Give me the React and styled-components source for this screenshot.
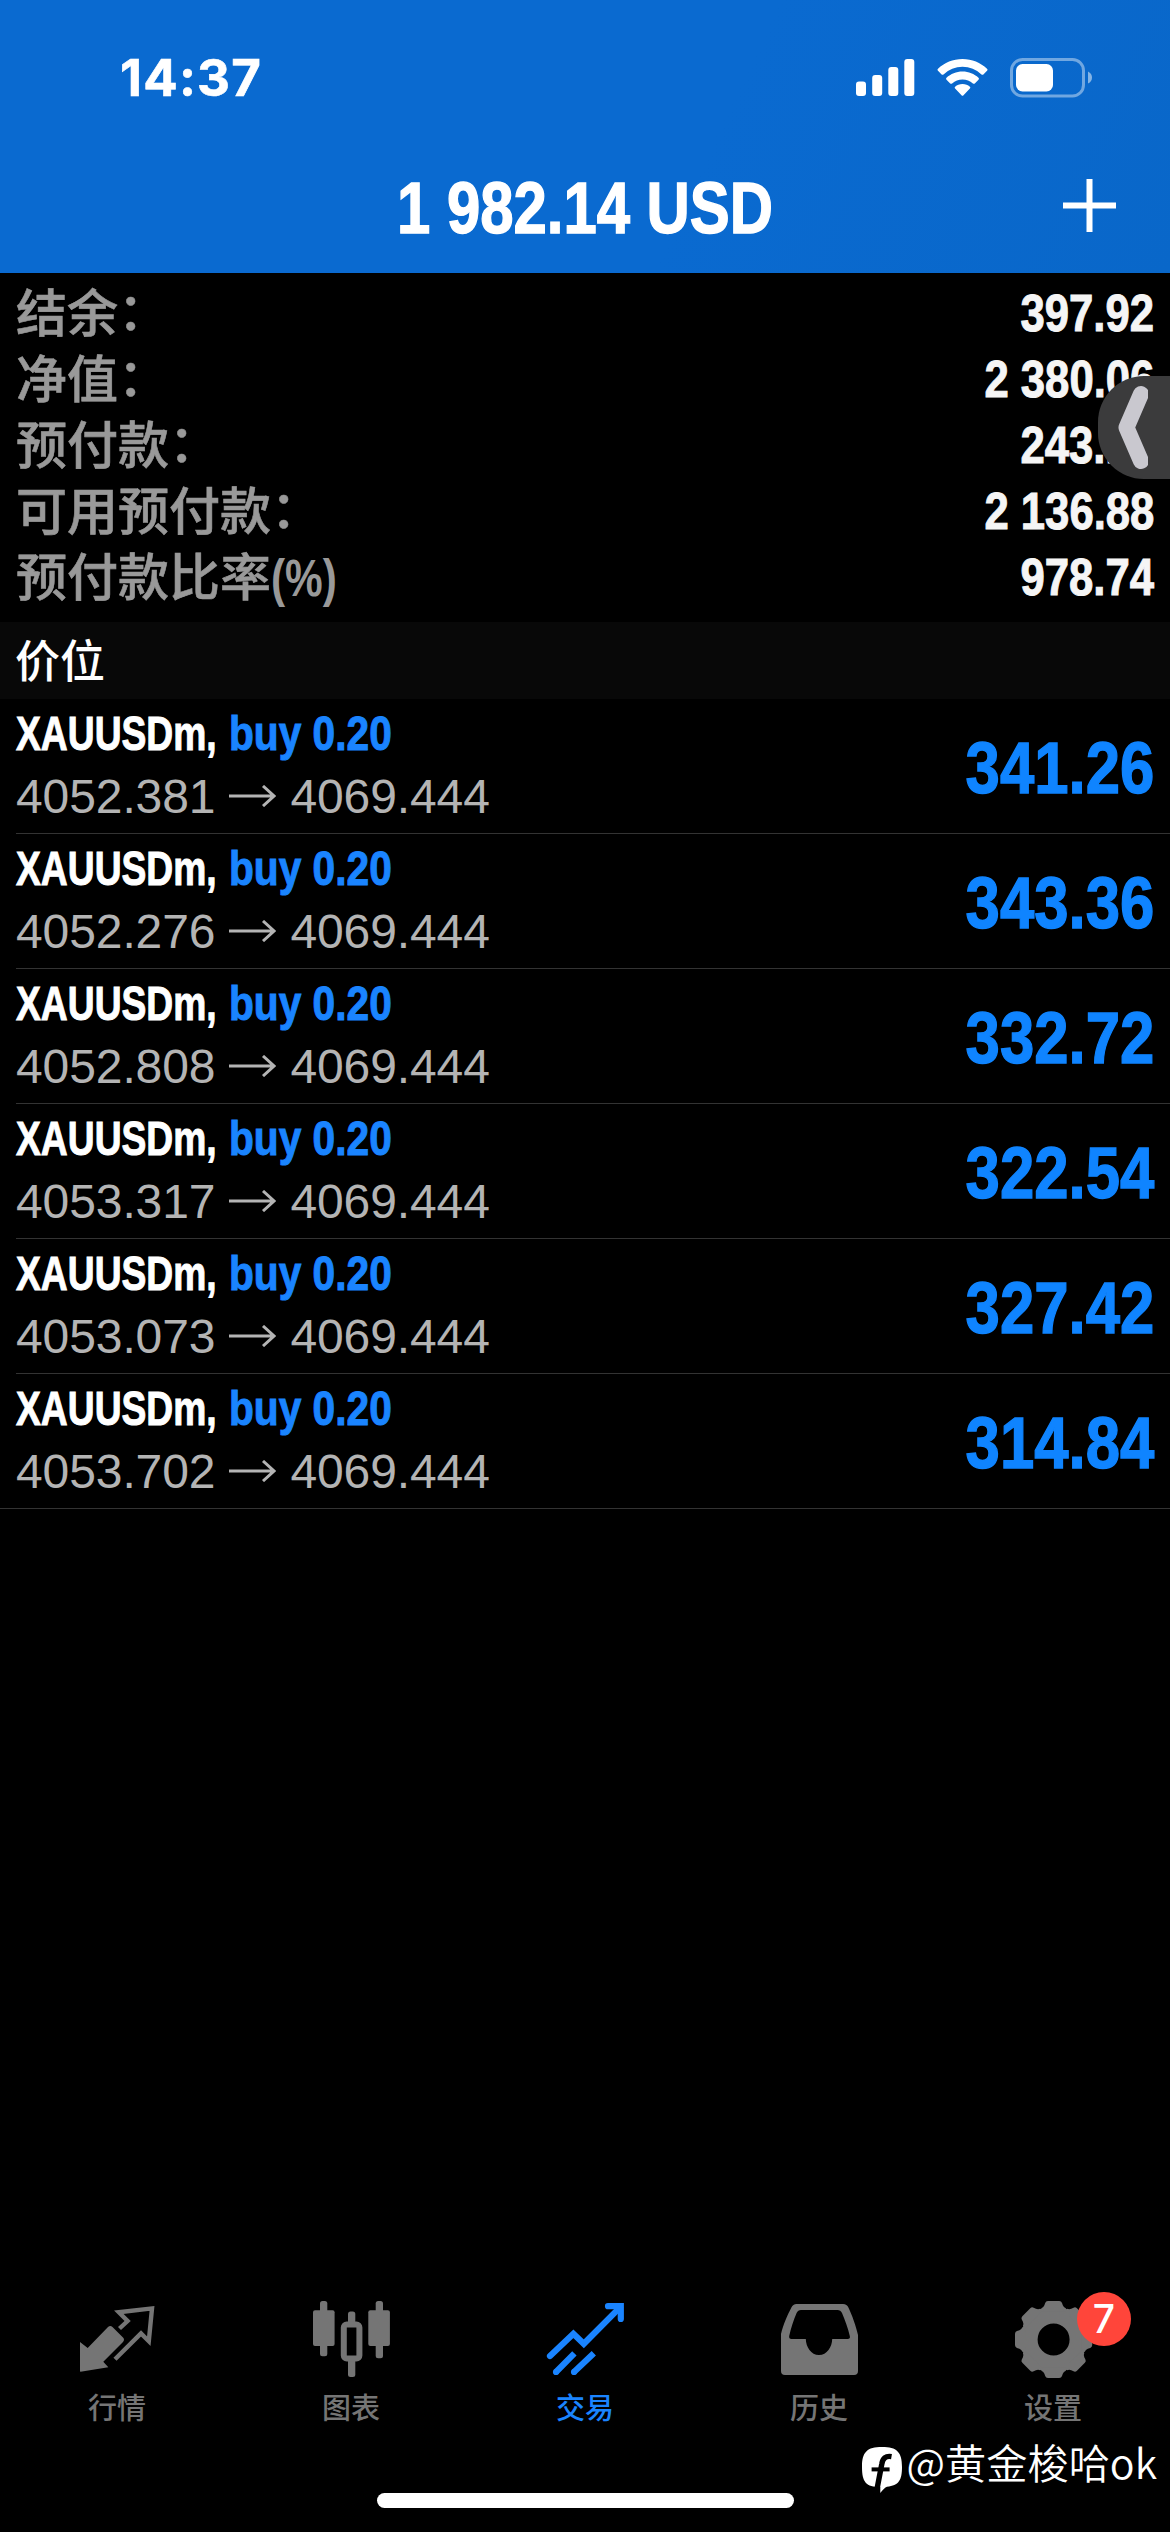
import React from 'react'
import styled, { createGlobalStyle } from 'styled-components'

const summary = [
  { label: '结余', colon: true, value: '397.92' },
  { label: '净值', colon: true, value: '2 380.06' },
  { label: '预付款', colon: true, value: '243.18' },
  { label: '可用预付款', colon: true, value: '2 136.88' },
  { label: '预付款比率', unit: '(%)', value: '978.74' },
]

const positions = [
  { open: '4052.381', profit: '341.26' },
  { open: '4052.276', profit: '343.36' },
  { open: '4052.808', profit: '332.72' },
  { open: '4053.317', profit: '322.54' },
  { open: '4053.073', profit: '327.42' },
  { open: '4053.702', profit: '314.84' },
]

const QuotesIcon = () => (
  <TabSvg viewBox="0 0 80 80">
    <path
      d="M3 42 L10.7 48 L31 27 Q33.3 24.8 35.5 27 L46 37.6 Q48 39.8 46 42 L26.3 61.7 L31.3 67.3 L3.5 71.7 Q3 71.7 3 71 Z"
      fill="currentColor"
    />
    <path
      d="M42.5 28.5 L50.6 21 L41.8 12.2 L75 8.4 L71.8 41.2 L64 33.4 L38 59.2"
      fill="none"
      stroke="currentColor"
      strokeWidth="4.4"
    />
  </TabSvg>
)

const ChartIcon = () => (
  <TabSvg viewBox="0 0 80 80">
    <g fill="currentColor">
      <rect x="9" y="1" width="7.3" height="55.3" rx="2.5" />
      <rect x="2" y="10.3" width="21.6" height="35.7" rx="2" />
      <rect x="64.7" y="1" width="7.3" height="57.3" rx="2.5" />
      <rect x="57.3" y="10.3" width="21.6" height="35.7" rx="2" />
      <rect x="37" y="11.5" width="7.3" height="14" rx="2.5" />
      <rect x="37" y="58" width="7.3" height="19" rx="2.5" />
    </g>
    <rect x="32.8" y="24.6" width="15.6" height="33.8" rx="3" fill="none" stroke="currentColor" strokeWidth="6" />
  </TabSvg>
)

const TradeIcon = () => (
  <TabSvg viewBox="0 0 80 80">
    <g fill="none" stroke="currentColor" strokeWidth="6.2">
      <path d="M5 56 L28.4 33.8 L38.8 43.8 L75 7.4" strokeLinecap="round" />
      <path d="M63 6.2 H75.8 V19" strokeLinecap="round" />
      <path d="M11 72 L29.4 53.4 M29 72 L48.8 53.2" />
    </g>
    <circle cx="11" cy="72" r="3.1" fill="currentColor" />
    <circle cx="29" cy="72" r="3.1" fill="currentColor" />
  </TabSvg>
)

const HistoryIcon = () => (
  <TabSvg viewBox="0 0 80 80">
    <path
      fillRule="evenodd"
      fill="currentColor"
      d="M17.5 4 H64 Q68 4 69.4 7.5 C73 15 77 26 79 35 V71 Q79 75 75 75 H6 Q2 75 2 71 V34 C4 25 9 14 12.4 7.5 Q14 4 17.5 4 Z
         M22 10 Q19 10 17.6 13 C14.5 20 12 28 10.2 36 Q9.8 39 12.5 39 H26.8 C27 47 32 55 40 55 S53 47 53.2 39 H68.5 Q71.6 39 70.8 36 C69 28 66 20 63 13 Q61.6 10 58.5 10 Z"
    />
  </TabSvg>
)

const tooth =
  'M-13.5 -28 L-12.2 -31.2 Q-10 -32 -9.2 -34.2 L-8.4 -36.6 Q-7.8 -38.6 -5.6 -38.6 H5.6 Q7.8 -38.6 8.4 -36.6 L9.2 -34.2 Q10 -32 12.2 -31.2 L13.5 -28 Z'

const SettingsIcon = () => (
  <TabSvg viewBox="0 0 80 80">
    <g transform="translate(40.6 39.5)" fill="currentColor">
      <circle r="24" fill="none" stroke="currentColor" strokeWidth="16" />
      {[0, 45, 90, 135, 180, 225, 270, 315].map((a) => (
        <path key={a} d={tooth} transform={`rotate(${a})`} />
      ))}
    </g>
  </TabSvg>
)

const tabs = [
  { name: '行情', Icon: QuotesIcon },
  { name: '图表', Icon: ChartIcon },
  { name: '交易', Icon: TradeIcon, active: true },
  { name: '历史', Icon: HistoryIcon },
  { name: '设置', Icon: SettingsIcon, badge: 7 },
]

const App = () => {
  return (
    <Screen>
      <GlobalStyle />
      <Header>
        <StatusBar>
          <Time>14:37</Time>
          <StatusIcons>
            <svg width="59" height="38" viewBox="0 0 59 38" fill="#fff">
              <rect x="0" y="22.5" width="10" height="14.5" rx="3" />
              <rect x="16.2" y="16" width="10" height="21" rx="3" />
              <rect x="32.3" y="8" width="10" height="29" rx="3" />
              <rect x="48.3" y="0" width="10" height="37" rx="3" />
            </svg>
            <svg width="51" height="38" viewBox="0 0 51 38" fill="#fff">
              <path d="M25.5 0 C35 0 43.6 3.7 50 9.7 Q51 10.7 50 11.7 L46.4 15.4 Q45.5 16.2 44.5 15.4 A27.6 27.6 0 0 0 6.5 15.4 Q5.5 16.2 4.6 15.4 L1 11.7 Q0 10.7 1 9.7 C7.4 3.7 16 0 25.5 0 Z" />
              <path d="M25.5 12.5 C31.7 12.5 37.3 14.9 41.5 18.7 Q42.5 19.7 41.5 20.7 L37.8 24.4 Q36.9 25.2 35.9 24.4 A15.5 15.5 0 0 0 15.1 24.4 Q14.1 25.2 13.2 24.4 L9.5 20.7 Q8.5 19.7 9.5 18.7 C13.7 14.9 19.3 12.5 25.5 12.5 Z" />
              <path d="M25.5 25 C28.4 25 31 26 32.9 27.7 Q33.9 28.6 32.9 29.6 L26.5 36.2 Q25.5 37.2 24.5 36.2 L18.1 29.6 Q17.1 28.6 18.1 27.7 C20 26 22.6 25 25.5 25 Z" />
            </svg>
            <svg width="82" height="40" viewBox="0 0 82 40">
              <rect x="1.5" y="1.5" width="72" height="36.5" rx="11" fill="none" stroke="#fff" strokeOpacity=".42" strokeWidth="3" />
              <rect x="6" y="6" width="37" height="27.5" rx="6.5" fill="#fff" />
              <path d="M78 13.5 Q82 15.5 82 19.5 T78 25.5 Z" fill="#fff" fillOpacity=".5" />
            </svg>
          </StatusIcons>
        </StatusBar>
        <TitleBar>
          <Title>1 982.14 USD</Title>
          <AddButton>
            <svg width="54" height="53" viewBox="0 0 54 53" stroke="#fff" strokeWidth="6">
              <path d="M27.5 0 V53 M1 26.5 H54" />
            </svg>
          </AddButton>
        </TitleBar>
      </Header>

      <Summary>
        {summary.map((row) => (
          <SummaryRow key={row.label}>
            <Label>
              {row.label}
              {row.colon && <Colon>：</Colon>}
              {row.unit && <Unit>{row.unit}</Unit>}
            </Label>
            <Value>{row.value}</Value>
          </SummaryRow>
        ))}
        <SideHandle>
          <svg width="30" height="88" viewBox="0 0 30 88" fill="none" stroke="#c9c8cf" strokeWidth="16" strokeLinecap="round" strokeLinejoin="round">
            <path d="M23 10 L8.5 43.5 L23 77" />
          </svg>
        </SideHandle>
      </Summary>

      <SectionTitle>价位</SectionTitle>

      <List>
        {positions.map((p) => (
          <Position key={p.open}>
            <Info>
              <Order>
                <Symbol>XAUUSDm,</Symbol>
                <Side>buy 0.20</Side>
              </Order>
              <Prices>
                <span>{p.open}</span>
                <svg width="47" height="22" viewBox="0 0 47 22" fill="none" stroke="currentColor" strokeWidth="3">
                  <path d="M0 11 H45 M34 1 L45 11 L34 21" />
                </svg>
                <span>4069.444</span>
              </Prices>
            </Info>
            <Profit>{p.profit}</Profit>
          </Position>
        ))}
      </List>

      <TabBar>
        {tabs.map(({ name, Icon, active, badge }) => (
          <Tab key={name} $active={active}>
            <Icon />
            {badge && <Badge>{badge}</Badge>}
            <TabName>{name}</TabName>
          </Tab>
        ))}
      </TabBar>

      <Footer>
        <HomeIndicator />
        <Watermark>
          <svg width="41" height="48" viewBox="0 0 41 48">
            <path d="M20 0 C35 0 40 5 40 20 C40 33 37 38.5 25 39.8 Q22 41 18.3 46 V40 C4 40 0 35 0 20 C0 5 5 0 20 0 Z" fill="#fff" />
            <path d="M29.5 9.6 C23.5 8.6 20.6 11.5 19.8 17 L15.2 41" fill="none" stroke="#000" strokeWidth="5.4" />
            <path d="M9.6 22.4 H27.6" stroke="#000" strokeWidth="4" />
          </svg>
          <Account>@黄金梭哈ok</Account>
        </Watermark>
      </Footer>
    </Screen>
  )
}

const GlobalStyle = createGlobalStyle`
  * {
    box-sizing: border-box;
  }
  body {
    margin: 0;
    background: #000;
  }
  svg {
    display: block;
    flex-shrink: 0;
  }
`
const Screen = styled.div`
  width: 1170px;
  height: 2532px;
  display: flex;
  flex-direction: column;
  overflow: hidden;
  background: #000;
  color: #fff;
  font-family: 'Liberation Sans', 'Noto Sans CJK SC', sans-serif;
`
const Header = styled.header`
  height: 273px;
  background: linear-gradient(115deg, #0a6ad0 60%, #0967c9 100%);
`
const StatusBar = styled.div`
  height: 156px;
  padding: 0 78px 0 120px;
  display: flex;
  justify-content: space-between;
  align-items: center;
`
const Time = styled.div`
  font-family: Inter, sans-serif;
  font-size: 51px;
  font-weight: 700;
  line-height: 60px;
  letter-spacing: 1.2px;
  -webkit-text-stroke: 0.6px currentColor;
`
const StatusIcons = styled.div`
  display: flex;
  align-items: center;
  gap: 22px;
`
const TitleBar = styled.div`
  height: 103px;
  padding: 0 54px;
  display: grid;
  grid-template-columns: 54px 1fr 54px;
  align-items: center;
`
/* scaleX gives the condensed look of the bold figures */
const Title = styled.h1`
  grid-column: 2;
  margin: 0;
  font-size: 73px;
  font-weight: 700;
  line-height: 103px;
  text-align: center;
  white-space: nowrap;
  -webkit-text-stroke: 1.4px currentColor;
  transform: scaleX(0.82);
`
const AddButton = styled.button`
  padding: 0 0 4px;
  border: none;
  background: none;
`
const Summary = styled.section`
  position: relative;
  height: 349px;
  padding: 6px 16px 13px;
`
const SummaryRow = styled.div`
  height: 66px;
  display: flex;
  justify-content: space-between;
  align-items: center;
`
const Label = styled.span`
  display: flex;
  padding-top: 5px;
  color: #999;
  font-size: 51px;
  font-weight: 500;
  line-height: 61px;
  -webkit-text-stroke: 0.6px currentColor;
`
const Colon = styled.span`
  transform: translateY(-2px);
`
const Unit = styled.span`
  font-weight: 700;
  -webkit-text-stroke: 0;
  transform: scaleX(0.83);
  transform-origin: left;
`
const Value = styled.span`
  padding-top: 3px;
  color: #f5f5f5;
  font-size: 52px;
  font-weight: 700;
  line-height: 63px;
  -webkit-text-stroke: 1px currentColor;
  transform: scaleX(0.84);
  transform-origin: right;
`
const SideHandle = styled.div`
  position: absolute;
  top: 103px;
  right: 0;
  width: 72px;
  height: 103px;
  padding: 8px 0 0 20px;
  border-radius: 46px 0 0 46px;
  background: #3b3b3c;
`
const SectionTitle = styled.h2`
  height: 77px;
  margin: 0;
  padding: 0 15px;
  background: #080808;
  font-family: 'Noto Sans CJK SC', sans-serif;
  font-size: 45px;
  font-weight: 500;
  line-height: 73px;
`
const List = styled.div`
  flex: 1;
`
const Position = styled.div`
  height: 135px;
  margin-left: 16px;
  padding-right: 16px;
  display: flex;
  justify-content: space-between;
  align-items: center;
  border-bottom: 1px solid #333;
  &:last-child {
    margin-left: 0;
    padding-left: 16px;
  }
`
const Info = styled.div`
  display: flex;
  flex-direction: column;
  padding-bottom: 3px;
`
const Order = styled.div`
  display: flex;
  font-size: 49px;
  font-weight: 700;
  line-height: 63px;
  -webkit-text-stroke: 1px currentColor;
`
const Symbol = styled.span`
  width: 213px;
  transform: scaleX(0.76);
  transform-origin: left;
`
const Side = styled.span`
  color: #1a84ff;
  white-space: nowrap;
  transform: scaleX(0.83);
  transform-origin: left;
`
const Prices = styled.div`
  display: flex;
  align-items: center;
  gap: 14px;
  color: #b4b4b4;
  font-size: 48px;
  letter-spacing: -0.1px;
  line-height: 63px;
`
const Profit = styled.div`
  padding-top: 2px;
  color: #0f84ff;
  font-size: 73px;
  font-weight: 700;
  -webkit-text-stroke: 1.4px currentColor;
  transform: scaleX(0.845);
  transform-origin: right;
`
const TabBar = styled.nav`
  height: 140px;
  display: grid;
  grid-template-columns: repeat(5, 1fr);
`
const Tab = styled.div`
  position: relative;
  display: flex;
  flex-direction: column;
  align-items: center;
  color: ${({ $active }) => ($active ? '#1a84ff' : '#757575')};
`
const TabSvg = styled.svg`
  width: 80px;
  height: 80px;
`
const TabName = styled.span`
  margin-top: 5px;
  font-family: 'Noto Sans CJK SC', sans-serif;
  font-size: 29px;
  font-weight: 500;
  line-height: 42px;
`
const Badge = styled.span`
  position: absolute;
  top: -8px;
  left: 141px;
  width: 54px;
  height: 54px;
  border-radius: 50%;
  background: #ff453a;
  color: #fff;
  font-family: Inter, sans-serif;
  font-size: 39px;
  font-weight: 500;
  line-height: 54px;
  text-align: center;
`
const Footer = styled.footer`
  position: relative;
  height: 92px;
  display: flex;
  justify-content: center;
  align-items: flex-end;
  padding-bottom: 24px;
`
const HomeIndicator = styled.div`
  width: 417px;
  height: 15px;
  border-radius: 8px;
  background: #fff;
`
const Watermark = styled.div`
  position: absolute;
  top: 0;
  right: 13px;
  display: flex;
  align-items: flex-start;
  gap: 4px;
  padding-top: 7px;
`
const Account = styled.span`
  margin-top: -11px;
  font-family: 'Noto Sans CJK SC', sans-serif;
  font-size: 41.2px;
  font-weight: 350;
  line-height: 50px;
`

export default App
